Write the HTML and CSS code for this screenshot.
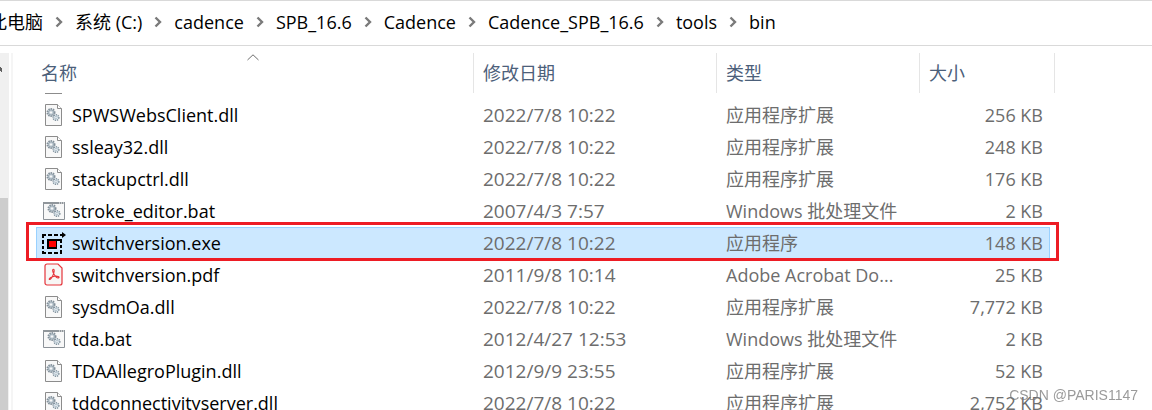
FILE: index.html
```html
<!DOCTYPE html>
<html lang="zh-CN">
<head>
  <meta charset="UTF-8">
  <meta name="viewport" content="width=device-width, initial-scale=1.0">
  <title>bin</title>
  <link rel="stylesheet" href="styles.css">
</head>
<body>
  <!-- Shared icons -->
  <svg class="sprite" width="0" height="0" aria-hidden="true">
    <defs>
      <g id="gears">
        <circle cx="7" cy="9.5" r="3.6" fill="#dfe7ec" stroke="#84919b" stroke-width="1.8" stroke-dasharray="1.5 .8"/>
        <circle cx="7" cy="9.5" r="2.6" fill="#c7d2da" stroke="#8b9aa5" stroke-width=".8"/>
        <circle cx="7" cy="9.5" r="1.1" fill="#f8f8f8"/>
        <circle cx="12" cy="14.5" r="2.8" fill="#e7f1f6" stroke="#8494a0" stroke-width="1.6" stroke-dasharray="1.3 .8"/>
        <circle cx="12" cy="14.5" r="1.1" fill="#fff" stroke="#9aabb7" stroke-width=".7"/>
      </g>
      <symbol id="icon-dll" viewBox="0 0 24 24">
        <path d="M3.5 1.5h12l4 4v17h-16z" fill="#f8f8f8" stroke="#8c8c8c"/>
        <path d="M15.5 1.5v4h4" fill="#fff" stroke="#8c8c8c"/>
        <use href="#gears" x="2"/>
      </symbol>
      <symbol id="icon-bat" viewBox="0 0 24 24">
        <path d="M1.5 3.5h21v17h-21z" fill="#f8f8f8" stroke="#8c9298"/>
        <path d="M1 3h22v2H1z" fill="#90969b"/>
        <path d="M17 4h1m1 0h1m1 0h1" stroke="#fff"/>
        <use href="#gears" x="3"/>
      </symbol>
      <symbol id="icon-exe" viewBox="0 0 24 24">
        <path d="M0 3h4v2H0zM6 3h4v2H6zM12 3h4v2h-4zM0 3h2v4H0zM0 9h2v4H0zM0 15h2v3H0zM0 20h2v3H0zM2 21h2v2H2zM6 21h4v2H6zM12 21h4v2h-4zM18 19h2v4h-2zM18 14h2v3h-2zM18 9h2v3h-2zM18 3h2V1l4 3-4 3V5h-2z"/>
        <path d="M5 8h15v2h-5v8H5z"/>
        <path d="M7 10h7v6H7z" fill="#f00"/>
      </symbol>
      <symbol id="icon-pdf" viewBox="0 0 24 24">
        <path d="M5 1h11l4 4v15a2 2 0 0 1-2 2H5a2 2 0 0 1-2-2V3a2 2 0 0 1 2-2z" fill="#f8f6f5" stroke="#e5343b" stroke-width="1.2"/>
        <path d="M11.500 6.200c-1.500 0-.8 3 .5 5 1.200 2 3.500 4.200 4.800 3.500 1.200-.8-1.500-1.900-4-1.500-3 .4-6 1.800-5.600 3 .5 1.200 2.500-1 3.700-3.800 1.200-2.500 1.800-6.200.6-6.200z" fill="none" stroke="#e5343b" stroke-width="1.100"/>
      </symbol>
      <symbol id="icon-chevron" viewBox="0 0 8 12">
        <path d="M1.500 1.500L6 6l-4.500 4.500" fill="none" stroke="#7a7a7a" stroke-width="2.400"/>
      </symbol>
    </defs>
  </svg>

  <!-- Address bar -->
  <nav class="address-bar">
    <a href="#">此电脑</a>
    <svg class="chevron"><use href="#icon-chevron"/></svg>
    <a href="#">系统 (C:)</a>
    <svg class="chevron"><use href="#icon-chevron"/></svg>
    <a href="#">cadence</a>
    <svg class="chevron"><use href="#icon-chevron"/></svg>
    <a href="#">SPB_16.6</a>
    <svg class="chevron"><use href="#icon-chevron"/></svg>
    <a href="#">Cadence</a>
    <svg class="chevron"><use href="#icon-chevron"/></svg>
    <a href="#">Cadence_SPB_16.6</a>
    <svg class="chevron"><use href="#icon-chevron"/></svg>
    <a href="#">tools</a>
    <svg class="chevron"><use href="#icon-chevron"/></svg>
    <a href="#">bin</a>
  </nav>

  <div class="explorer">
    <!-- Right edge of the navigation pane -->
    <div class="scrollbar">
      <svg class="scroll-up" viewBox="0 0 2 5"><path d="M0 0h1v1h1v4H1V4H0z" fill="#606060"/></svg>
      <div class="thumb"></div>
    </div>

    <!-- File list -->
    <main class="files">
      <table>
        <thead>
          <tr>
            <th class="name">名称
              <svg class="sort" viewBox="0 0 12 7"><path d="M.5 6L6 .8 11.500 6" fill="none" stroke="#6d6d6d"/></svg>
            </th>
            <th class="date">修改日期</th>
            <th class="type">类型</th>
            <th class="size">大小</th>
          </tr>
        </thead>
        <tbody>
          <tr class="scrolled"><td colspan="4"><div class="icon-edge"></div></td></tr>
          <tr>
            <td><div class="file"><svg><use href="#icon-dll"/></svg>SPWSWebsClient.dll</div></td>
            <td class="modified">2022/7/8 10:22</td><td>应用程序扩展</td><td>256 KB</td>
          </tr>
          <tr>
            <td><div class="file"><svg><use href="#icon-dll"/></svg>ssleay32.dll</div></td>
            <td class="modified">2022/7/8 10:22</td><td>应用程序扩展</td><td>248 KB</td>
          </tr>
          <tr>
            <td><div class="file"><svg><use href="#icon-dll"/></svg>stackupctrl.dll</div></td>
            <td class="modified">2022/7/8 10:22</td><td>应用程序扩展</td><td>176 KB</td>
          </tr>
          <tr>
            <td><div class="file"><svg><use href="#icon-bat"/></svg>stroke_editor.bat</div></td>
            <td class="modified">2007/4/3 7:57</td><td>Windows 批处理文件</td><td>2 KB</td>
          </tr>
          <tr class="selected">
            <td><div class="file"><svg><use href="#icon-exe"/></svg>switchversion.exe</div></td>
            <td class="modified">2022/7/8 10:22</td><td>应用程序</td><td>148 KB</td>
          </tr>
          <tr>
            <td><div class="file"><svg><use href="#icon-pdf"/></svg>switchversion.pdf</div></td>
            <td class="modified">2011/9/8 10:14</td><td>Adobe Acrobat Do...</td><td>25 KB</td>
          </tr>
          <tr>
            <td><div class="file"><svg><use href="#icon-dll"/></svg>sysdmOa.dll</div></td>
            <td class="modified">2022/7/8 10:22</td><td>应用程序扩展</td><td>7,772 KB</td>
          </tr>
          <tr>
            <td><div class="file"><svg><use href="#icon-bat"/></svg>tda.bat</div></td>
            <td class="modified">2012/4/27 12:53</td><td>Windows 批处理文件</td><td>2 KB</td>
          </tr>
          <tr>
            <td><div class="file"><svg><use href="#icon-dll"/></svg>TDAAllegroPlugin.dll</div></td>
            <td class="modified">2012/9/9 23:55</td><td>应用程序扩展</td><td>52 KB</td>
          </tr>
          <tr>
            <td><div class="file"><svg><use href="#icon-dll"/></svg>tddconnectivityserver.dll</div></td>
            <td class="modified">2022/7/8 10:22</td><td>应用程序扩展</td><td>2,752 KB</td>
          </tr>
        </tbody>
      </table>
    </main>
  </div>

  <div class="watermark">CSDN @PARIS1147</div>
</body>
</html>
```

FILE: styles.css
```css
* {
  box-sizing: border-box;
}

body {
  display: flex;
  flex-direction: column;
  height: 100vh;
  margin: 0;
  overflow: hidden;
  background-color: #fff;
  color: #000;
  font-family: "Open Sans", "Noto Sans CJK SC", sans-serif;
  font-size: 18px;
  line-height: 24px;
}

.sprite {
  position: absolute;
}

/* Address bar */
.address-bar {
  display: flex;
  flex-shrink: 0;
  align-items: center;
  gap: 12px;
  height: 46px;
  margin-left: -11px;
  padding-bottom: 2px;
  border-top: 1px solid #d9d9d9;
  border-bottom: 1px solid #d9d9d9;
  white-space: nowrap;
}

.address-bar a {
  color: #000;
  text-decoration: none;
}

.chevron {
  flex-shrink: 0;
  width: 8px;
  height: 12px;
}

/* Panes */
.explorer {
  display: flex;
  flex: 1;
  min-height: 0;
  padding-top: 7px;
}

.scrollbar {
  display: flex;
  flex-direction: column;
  width: 9px;
  padding-top: 14px;
  background-color: #f0f0f0;
}

.scroll-up {
  width: 2px;
  height: 5px;
}

.thumb {
  flex: 1;
  width: 8px;
  margin-top: 126px;
  background-color: #cdcdcd;
}

.files {
  flex: 1;
  min-width: 0;
  margin-left: 2px;
  padding: 0 97px 0 23px;
  border-left: 2px solid #f5f5f5;
}

/* File table */
table {
  width: 100%;
  table-layout: fixed;
  border-collapse: separate;
  border-spacing: 0;
}

th {
  position: relative;
  height: 40px;
  padding: 0 9px;
  border-right: 1px solid #e5e5e5;
  color: #4c607a;
  font-weight: normal;
  text-align: left;
}

th.name {
  padding-left: 5px;
}

.date {
  width: 243px;
}

.type {
  width: 203px;
}

.size {
  width: 135px;
}

.sort {
  position: absolute;
  top: 1px;
  left: 50%;
  width: 12px;
  height: 7px;
  margin-left: -8px;
}

td {
  height: 32px;
  padding: 0 9px;
  color: #6d6d6d;
  white-space: nowrap;
}

td:first-child {
  padding-left: 6px;
  color: #000;
}

td:last-child {
  padding-right: 7px;
  border-right: 5px solid transparent;
  background-clip: padding-box;
  text-align: right;
}

td.modified {
  font-size: 19px;
}

.file {
  display: flex;
  align-items: center;
  gap: 6px;
}

.file svg {
  width: 24px;
  height: 24px;
  overflow: visible;
}

/* Bottom edge of the row under the header */
.scrolled td {
  height: 6px;
  padding: 0 9px;
  line-height: 0;
  vertical-align: top;
}

.icon-edge {
  width: 17px;
  height: 1px;
  background-color: #8c8c8c;
}

/* Selected row */
.selected {
  position: relative;
}

.selected td {
  background-color: #cce8ff;
  box-shadow: inset 0 1px #99d1ff;
}

.selected td:first-child {
  box-shadow: inset 1px 1px #99d1ff;
}

.selected td:last-child {
  box-shadow: inset -1px 1px #99d1ff;
}

.selected td:first-child::after {
  content: "";
  position: absolute;
  top: -5px;
  right: -4px;
  bottom: -2px;
  left: -10px;
  border: 3px solid #ed1c24;
}

.watermark {
  position: fixed;
  right: 14px;
  bottom: 5px;
  color: rgba(120, 120, 120, 0.75);
  font-family: "Liberation Sans", sans-serif;
  font-size: 14px;
  line-height: 20px;
}
```
